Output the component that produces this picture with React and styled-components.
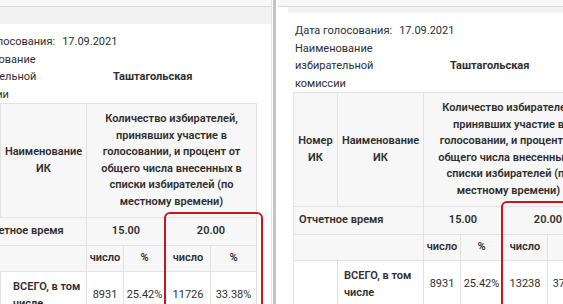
import React from "react";
import styled, { createGlobalStyle } from "styled-components";

const Global = createGlobalStyle`
  html, body { margin: 0; padding: 0; background: #fff; }
  body {
    width: 563px; height: 304px; overflow: hidden;
    font-family: Roboto, "Open Sans", sans-serif;
    color: #2e2e2e;
  }
`;

const Screen = styled.div`
  display: flex;
  width: 563px;
  height: 304px;
  overflow: hidden;
  background: #fff;
`;

const Panel = styled.div`
  flex: 0 0 ${(p) => p.$width}px;
  overflow: hidden;
  background: #fff;
  border-right: ${(p) => (p.$edge ? "1px solid #e3e3e3" : "none")};
`;

const Divider = styled.div`
  flex: 0 0 3px;
  margin: 0 2px 0 1px;
  background: #c4c4c4;
`;

const Report = styled.div`
  width: 360px;
  margin-left: ${(p) => p.$shift}px;
`;

const TopStrip = styled.div`
  height: 6px;
  background: #f7f7f7;
  border-bottom: 1px solid #d9d9d9;
`;

const TopBand = styled.div`
  height: ${(p) => p.$h}px;
  margin-left: ${(p) => p.$inset}px;
  background: #f2f2f2;
`;

const Info = styled.div`
  padding: 9px 0 0 17px;
  font-size: 11px;
  line-height: 17.5px;
`;

const InfoLine = styled.div`
  display: flex;
  gap: 7px;
`;

const InfoGrid = styled.div`
  display: grid;
  grid-template-columns: 155px auto;
  align-items: center;
`;

const Strong = styled.span`
  font-weight: 700;
`;

const TableWrap = styled.div`
  position: relative;
  margin-left: 15px;
  width: 300px;
`;

const Table = styled.table`
  border-collapse: collapse;
  table-layout: fixed;
  width: 300px;
  font-size: 11px;
  line-height: 16.5px;
`;

const Cell = styled.td`
  border: 1px solid #e2e2e2;
  background: ${(p) => (p.$head ? "#f7f7f7" : "#fff")};
  font-weight: ${(p) => (p.$bold ? 600 : 400)};
  text-align: ${(p) => p.$align || "center"};
  padding: ${(p) => p.$pad || "4px 2px"};
  vertical-align: middle;
  white-space: nowrap;
  overflow: visible;
`;

const Highlight = styled.div`
  position: absolute;
  left: 208px;
  top: 109px;
  width: 99px;
  height: 150px;
  box-sizing: border-box;
  border: 2px solid #c8161e;
  border-radius: 6px;
  pointer-events: none;
`;

function ReportView({ shift, band, inset, timeAlign, totalPad, votes20, pct20 }) {
  return (
    <Report $shift={shift}>
      <TopStrip />
      <TopBand $h={band} $inset={inset} />
      <Info>
        <InfoLine>
          <span>Дата голосования:</span>
          <span>17.09.2021</span>
        </InfoLine>
        <InfoGrid>
          <span>
            Наименование
            <br />
            избирательной
            <br />
            комиссии
          </span>
          <Strong>Таштагольская</Strong>
        </InfoGrid>
      </Info>
      <TableWrap>
        <Table>
          <colgroup>
            <col style={{ width: 44 }} />
            <col style={{ width: 86 }} />
            <col style={{ width: 37 }} />
            <col style={{ width: 42 }} />
            <col style={{ width: 45 }} />
            <col style={{ width: 46 }} />
          </colgroup>
          <tbody>
            <tr>
              <Cell $head $bold $pad="7px 2px">
                Номер
                <br />
                ИК
              </Cell>
              <Cell $head $bold $pad="7px 2px">
                Наименование
                <br />
                ИК
              </Cell>
              <Cell $head $bold colSpan={4} $pad="7px 2px">
                Количество избирателей,
                <br />
                принявших участие в
                <br />
                голосовании, и процент от
                <br />
                общего числа внесенных в
                <br />
                списки избирателей (по
                <br />
                местному времени)
              </Cell>
            </tr>
            <tr>
              <Cell $head $bold colSpan={2} $align={timeAlign} $pad="5px 5px">
                Отчетное время
              </Cell>
              <Cell $head $bold colSpan={2} $pad="5px 2px">
                15.00
              </Cell>
              <Cell $head $bold colSpan={2} $pad="5px 2px">
                20.00
              </Cell>
            </tr>
            <tr>
              <Cell $head colSpan={2} $pad="4.5px 2px" />
              <Cell $head $bold $pad="4.5px 2px">число</Cell>
              <Cell $head $bold $pad="4.5px 2px">%</Cell>
              <Cell $head $bold $pad="4.5px 2px">число</Cell>
              <Cell $head $bold $pad="4.5px 2px">%</Cell>
            </tr>
            <tr>
              <Cell $pad="6px 2px" />
              <Cell $bold $align="left" $pad={`6px 2px 6px ${totalPad}px`} style={{ lineHeight: "17px" }}>
                ВСЕГО, в том
                <br />
                числе
              </Cell>
              <Cell $pad="6px 2px">8931</Cell>
              <Cell $pad="6px 1px">25.42%</Cell>
              <Cell $pad="6px 2px">{votes20}</Cell>
              <Cell $pad="6px 2px">{pct20}</Cell>
            </tr>
          </tbody>
        </Table>
        <Highlight />
      </TableWrap>
    </Report>
  );
}

export default function App() {
  return (
    <>
      <Global />
      <Screen>
        <Panel $width={271} $edge>
          <ReportView
            shift={-59}
            band={17}
            inset={0}
            timeAlign="center"
            totalPad={12}
            votes20="11726"
            pct20="33.38%"
          />
        </Panel>
        <Divider />
        <Panel $width={285}>
          <ReportView
            shift={0}
            band={6}
            inset={10}
            timeAlign="left"
            totalPad={6}
            votes20="13238"
            pct20="37.68%"
          />
        </Panel>
      </Screen>
    </>
  );
}
